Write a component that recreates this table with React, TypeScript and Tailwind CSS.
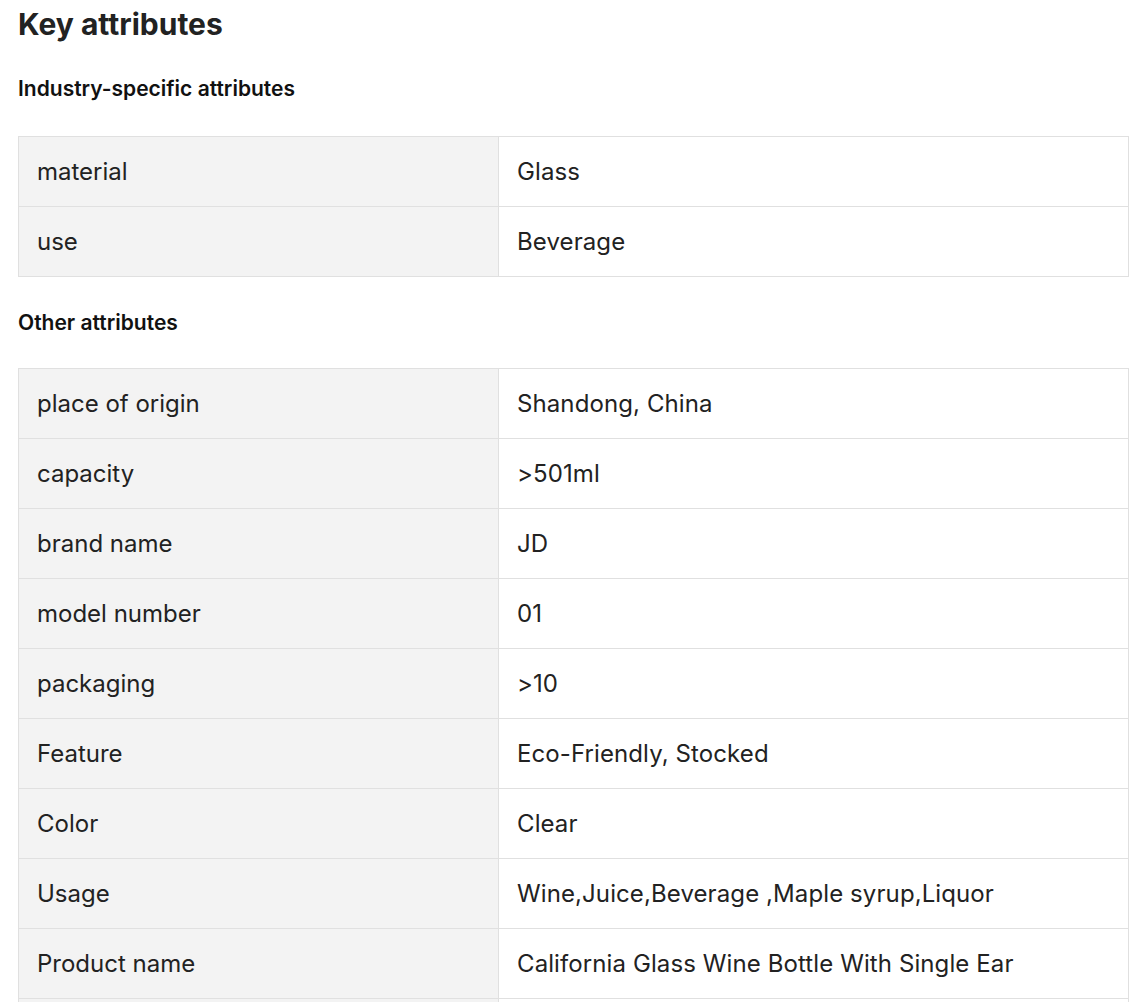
import React from "react";

const industry: [string, string][] = [
  ["material", "Glass"],
  ["use", "Beverage"],
];

const other: [string, string][] = [
  ["place of origin", "Shandong, China"],
  ["capacity", ">501ml"],
  ["brand name", "JD"],
  ["model number", "01"],
  ["packaging", ">10"],
  ["Feature", "Eco-Friendly, Stocked"],
  ["Color", "Clear"],
  ["Usage", "Wine,Juice,Beverage ,Maple syrup,Liquor"],
  ["Product name", "California Glass Wine Bottle With Single Ear"],
];

function Table({ rows, more }: { rows: [string, string][]; more?: boolean }) {
  return (
    <div className="w-[1111px] border-t border-l border-[#e0e0e0]">
      {rows.map(([k, v]) => (
        <div key={k} className="flex h-[70px]">
          <div className="w-[480px] shrink-0 bg-[#f3f3f3] border-r border-b border-[#e0e0e0] flex items-center pl-[18px] text-[24px] text-[#222]">
            {k}
          </div>
          <div className="flex-1 border-r border-b border-[#e0e0e0] flex items-center pl-[18px] text-[24px] tracking-[0.1px] text-[#222]">
            {v}
          </div>
        </div>
      ))}
      {more && (
        <div className="flex h-[70px]">
          <div className="w-[480px] shrink-0 bg-[#f3f3f3] border-r border-[#e0e0e0]" />
          <div className="flex-1 border-r border-[#e0e0e0]" />
        </div>
      )}
    </div>
  );
}

export default function App() {
  return (
    <div
      className="bg-white h-[1002px] overflow-hidden px-[18px]"
      style={{ fontFamily: "Inter, 'Noto Sans', sans-serif" }}
    >
      <h1 className="pt-[5px] text-[30px] leading-[38px] font-bold text-[#222]">Key attributes</h1>
      <h2 className="mt-[34px] text-[21px] leading-[24px] font-semibold text-[#111]">
        Industry-specific attributes
      </h2>
      <div className="mt-[35px]">
        <Table rows={industry} />
      </div>
      <h2 className="mt-[34px] text-[21px] leading-[24px] font-semibold text-[#111]">Other attributes</h2>
      <div className="mt-[33px]">
        <Table rows={other} more />
      </div>
    </div>
  );
}
